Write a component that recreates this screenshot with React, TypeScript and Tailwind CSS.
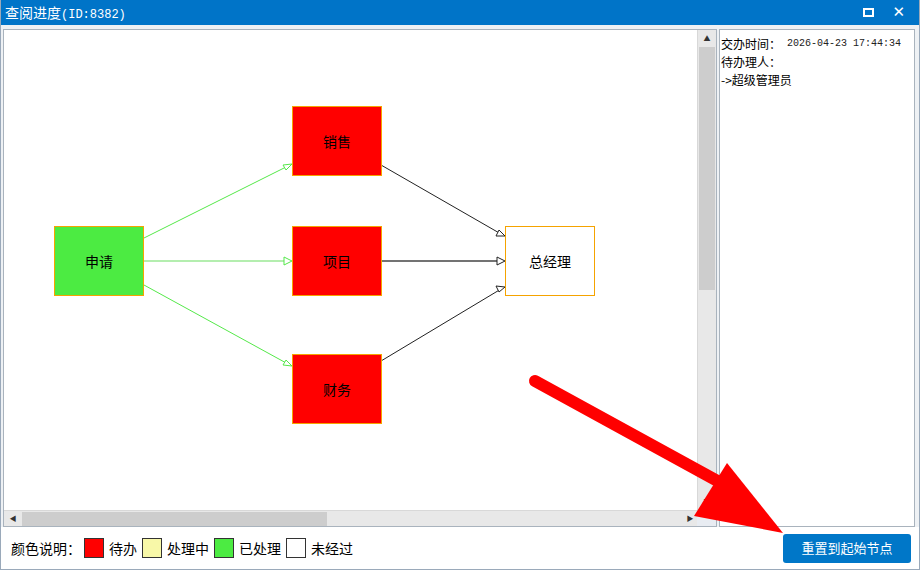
import React from "react";

const nodes = [
  { label: "申请", x: 50, y: 196, bg: "bg-[#4ceb42]" },
  { label: "销售", x: 288, y: 76, bg: "bg-[#ff0000]" },
  { label: "项目", x: 288, y: 196, bg: "bg-[#ff0000]" },
  { label: "财务", x: 288, y: 324, bg: "bg-[#ff0000]" },
  { label: "总经理", x: 501, y: 196, bg: "bg-white" },
];

const legend = [
  { label: "待办", color: "bg-[#ff0000]" },
  { label: "处理中", color: "bg-[#f8f8a8]" },
  { label: "已处理", color: "bg-[#4ceb42]" },
  { label: "未经过", color: "bg-white" },
];

const font = "font-['Noto_Sans_CJK_SC','Noto_Sans',sans-serif]";

export default function App() {
  return (
    <div className={`relative w-[920px] h-[570px] flex flex-col bg-white border border-t-0 border-[#9aa9ba] overflow-hidden ${font}`}>
      {/* title bar */}
      <div className="h-[25px] flex items-center justify-between bg-[#0074c8] text-white pl-[4px] pr-[14px] shrink-0">
        <span className="text-[14px] leading-none">
          查阅进度<span className="font-['Liberation_Mono',monospace] text-[12px]">(ID:8382)</span>
        </span>
        <div className="flex items-center gap-[18px]">
          <div className="w-[11px] h-[9px] border-2 border-white flex items-center justify-center">
            <div className="w-[3px] h-[1px] bg-[#0074c8]" />
          </div>
          <span className="text-[15px] font-bold leading-none font-['DejaVu_Sans',sans-serif]">✕</span>
        </div>
      </div>

      <div className="flex-1 flex flex-col bg-[#eef1f4] pt-[4px] pl-[2px] pr-[4px]">
        <div className="flex gap-[2px] h-[498px]">
          {/* diagram panel */}
          <div className="w-[714px] border border-[#a9b3bd] bg-white flex flex-col">
            <div className="flex flex-1">
              <div className="relative flex-1">
                <svg className="absolute inset-0" width="693" height="480">
                  <g stroke="#55e84a" strokeWidth="1" fill="none">
                    <line x1="140" y1="208" x2="284" y2="136" />
                    <line x1="140" y1="231" x2="284" y2="231" stroke="#9be894" strokeWidth="1.3" />
                    <line x1="140" y1="255" x2="284" y2="334" />
                    <polygon points="288,134 279,135 282,140" fill="white" />
                    <polygon points="288,231 280,227 280,235" fill="white" />
                    <polygon points="288,336 279,335 282,330" fill="white" />
                  </g>
                  <g stroke="#222" strokeWidth="1" fill="none">
                    <line x1="377" y1="135" x2="497" y2="204" />
                    <line x1="377" y1="231" x2="497" y2="231" stroke="#444" strokeWidth="1.3" />
                    <line x1="377" y1="331" x2="497" y2="259" />
                    <polygon points="501,206 492,206 495,200" fill="white" />
                    <polygon points="501,231 493,227 493,235" fill="white" />
                    <polygon points="501,257 492,256 495,262" fill="white" />
                  </g>
                </svg>
                {nodes.map((n) => (
                  <div
                    key={n.label}
                    className={`absolute w-[90px] h-[70px] border border-[#f5a300] ${n.bg} flex items-center justify-center text-[14px] text-black`}
                    style={{ left: n.x, top: n.y }}
                  >
                    {n.label}
                  </div>
                ))}
              </div>
              {/* vertical scrollbar */}
              <div className="w-[19px] bg-[#e8e8e8] border-l border-[#d8d8d8] flex flex-col">
                <div className="h-[17px] flex items-center justify-center text-[7px] text-[#333]">▲</div>
                <div className="h-[243px] bg-[#cdcdcd] mx-[1px]" />
                <div className="flex-1" />
                <div className="h-[17px] flex items-center justify-center text-[7px] text-[#333]">▼</div>
              </div>
            </div>
            {/* horizontal scrollbar */}
            <div className="h-[16px] flex border-t border-[#d8d8d8]">
              <div className="flex-1 bg-[#e8e8e8] flex items-center">
                <div className="w-[18px] flex items-center justify-center text-[7px] text-[#333]">◀</div>
                <div className="w-[305px] h-[14px] bg-[#cdcdcd]" />
                <div className="flex-1" />
                <div className="w-[14px] flex items-center justify-center text-[7px] text-[#333]">▶</div>
              </div>
              <div className="w-[19px] bg-[#e8ecf2]" />
            </div>
          </div>

          {/* info panel */}
          <div className="flex-1 border border-[#a9b3bd] bg-white px-[1px] py-[5px] text-[12px] leading-[18px] text-black">
            <div className="flex items-center">
              <span>交办时间：</span>
              <span className="ml-[6px] font-['Liberation_Mono',monospace] text-[10px] text-[#222]">2026-04-23 17:44:34</span>
            </div>
            <div>待办理人：</div>
            <div>-&gt;超级管理员</div>
          </div>
        </div>

        {/* legend + button */}
        <div className="flex-1 flex items-center justify-between bg-white -ml-[2px] -mr-[4px] pl-[10px] pr-[8px]">
          <div className="flex items-center text-[14px] text-black">
            <span className="mr-[3px]">颜色说明：</span>
            {legend.map((l) => (
              <div key={l.label} className="flex items-center mr-[5px]">
                <div className={`w-[20px] h-[20px] border border-[#333] ${l.color} mr-[5px]`} />
                <span>{l.label}</span>
              </div>
            ))}
          </div>
          <button className="w-[128px] h-[29px] rounded-[3px] bg-[#0077c8] text-white text-[13px]">
            重置到起始节点
          </button>
        </div>
      </div>

      {/* annotation arrow */}
      <svg className="absolute inset-0 pointer-events-none" width="920" height="570">
        <line x1="534" y1="381" x2="722" y2="484" stroke="#ff0000" strokeWidth="12" strokeLinecap="round" />
        <polygon points="693,516 726,463 782,533" fill="#ff0000" />
      </svg>
    </div>
  );
}
